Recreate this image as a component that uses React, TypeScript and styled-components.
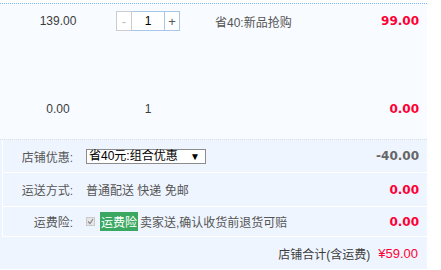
import styled, { createGlobalStyle } from "styled-components";

const GlobalStyle = createGlobalStyle`
  body {
    margin: 0;
    background: #fff;
    font-family: "Liberation Sans", "Noto Sans CJK SC", sans-serif;
    font-size: 12px;
    color: #3c3c3c;
  }
`;

const Wrapper = styled.div`
  width: 427px;
  padding-top: 3px;
`;

const ItemBlock = styled.div`
  background: #f8fbff;
  border-top: 1px dotted #80b2ff;
  height: 136px;
  padding-top: 7px;
  box-sizing: border-box;
`;

const ItemRow = styled.div<{ $gap?: number }>`
  display: grid;
  grid-template-columns: 116px 64px 1fr auto;
  align-items: center;
  height: 20px;
  margin-top: ${(p) => p.$gap || 0}px;
`;

const Cell = styled.div`
  text-align: center;
  color: #3c3c3c;
`;

const Promo = styled.div`
  padding-left: 35px;
  color: #555;
`;

const Money = styled.div<{ $muted?: boolean }>`
  font-family: "DejaVu Sans", sans-serif;
  font-weight: bold;
  font-size: 12px;
  color: ${(p) => (p.$muted ? "#666" : "#ff0036")};
  text-align: right;
  padding-right: 8px;
`;

const Stepper = styled.div`
  display: flex;
  height: 20px;
  width: 64px;
`;

const StepBtn = styled.span<{ $off?: boolean }>`
  width: 16px;
  box-sizing: border-box;
  border: 1px solid ${(p) => (p.$off ? "#ccc" : "#a7c6e8")};
  color: ${(p) => (p.$off ? "#bbb" : "#555")};
  display: flex;
  align-items: center;
  justify-content: center;
  font-size: 13px;
  background: #fff;
`;

const StepInput = styled.span`
  flex: 1;
  border-top: 1px solid #a7c6e8;
  border-bottom: 1px solid #a7c6e8;
  background: #fff;
  display: flex;
  align-items: center;
  justify-content: center;
  color: #000;
`;

const Lower = styled.div`
  background: #eff5ff;
  border-top: 1px dotted #d8dde6;
  padding-left: 2px;
`;

const OptRow = styled.div<{ $h: number }>`
  display: grid;
  grid-template-columns: 83px 1fr auto;
  align-items: center;
  height: ${(p) => p.$h}px;
  border-left: 1px solid #fff;
  border-bottom: 1px solid #fff;
`;

const Label = styled.div`
  text-align: right;
  color: #555;
  padding-right: 13px;
`;

const OptText = styled.div`
  display: flex;
  align-items: center;
  color: #555;
  white-space: nowrap;
`;

const FakeSelect = styled.div`
  width: 120px;
  height: 15px;
  box-sizing: border-box;
  border: 1px solid #8c8c8c;
  background: #fff;
  color: #000;
  display: flex;
  align-items: center;
  justify-content: space-between;
  padding: 0 5px 0 2px;
  font-size: 12px;
  line-height: 13px;
`;

const Arrow = styled.span`
  font-size: 10px;
  color: #000;
`;

const Check = styled.span`
  width: 7px;
  height: 7px;
  border: 1px solid #c9c9c9;
  background: #e6e6e6;
  margin: 0 5px 0 0;
  display: inline-flex;
`;

const Badge = styled.span`
  background: #3ba862;
  color: #fff;
  padding: 1px 1px;
  margin-right: 2px;
`;

const Footer = styled.div`
  background: #eff5ff;
  height: 32px;
  display: flex;
  align-items: center;
  justify-content: flex-end;
  padding-right: 9px;
  color: #3c3c3c;
`;

const Total = styled.span`
  color: #ff0036;
  font-size: 13px;
  margin-left: 8px;
`;

export default function App() {
  return (
    <Wrapper>
      <GlobalStyle />
      <ItemBlock>
        <ItemRow>
          <Cell>139.00</Cell>
          <Stepper>
            <StepBtn $off>-</StepBtn>
            <StepInput>1</StepInput>
            <StepBtn>+</StepBtn>
          </Stepper>
          <Promo>省40:新品抢购</Promo>
          <Money>99.00</Money>
        </ItemRow>
        <ItemRow $gap={68}>
          <Cell>0.00</Cell>
          <Cell>1</Cell>
          <Promo />
          <Money>0.00</Money>
        </ItemRow>
      </ItemBlock>
      <Lower>
        <OptRow $h={32}>
          <Label>店铺优惠:</Label>
          <OptText>
            <FakeSelect>
              <span>省40元:组合优惠</span>
              <Arrow>▼</Arrow>
            </FakeSelect>
          </OptText>
          <Money $muted>-40.00</Money>
        </OptRow>
        <OptRow $h={33}>
          <Label>运送方式:</Label>
          <OptText>普通配送 快递 免邮</OptText>
          <Money>0.00</Money>
        </OptRow>
        <OptRow $h={29}>
          <Label>运费险:</Label>
          <OptText>
            <Check>
              <svg width="7" height="7" viewBox="0 0 7 7">
                <path d="M1 3.5 L3 5.5 L6 1" stroke="#888" strokeWidth="1.2" fill="none" />
              </svg>
            </Check>
            <Badge>运费险</Badge>
            卖家送,确认收货前退货可赔
          </OptText>
          <Money>0.00</Money>
        </OptRow>
      </Lower>
      <Footer>
        店铺合计(含运费)
        <Total>¥59.00</Total>
      </Footer>
    </Wrapper>
  );
}
